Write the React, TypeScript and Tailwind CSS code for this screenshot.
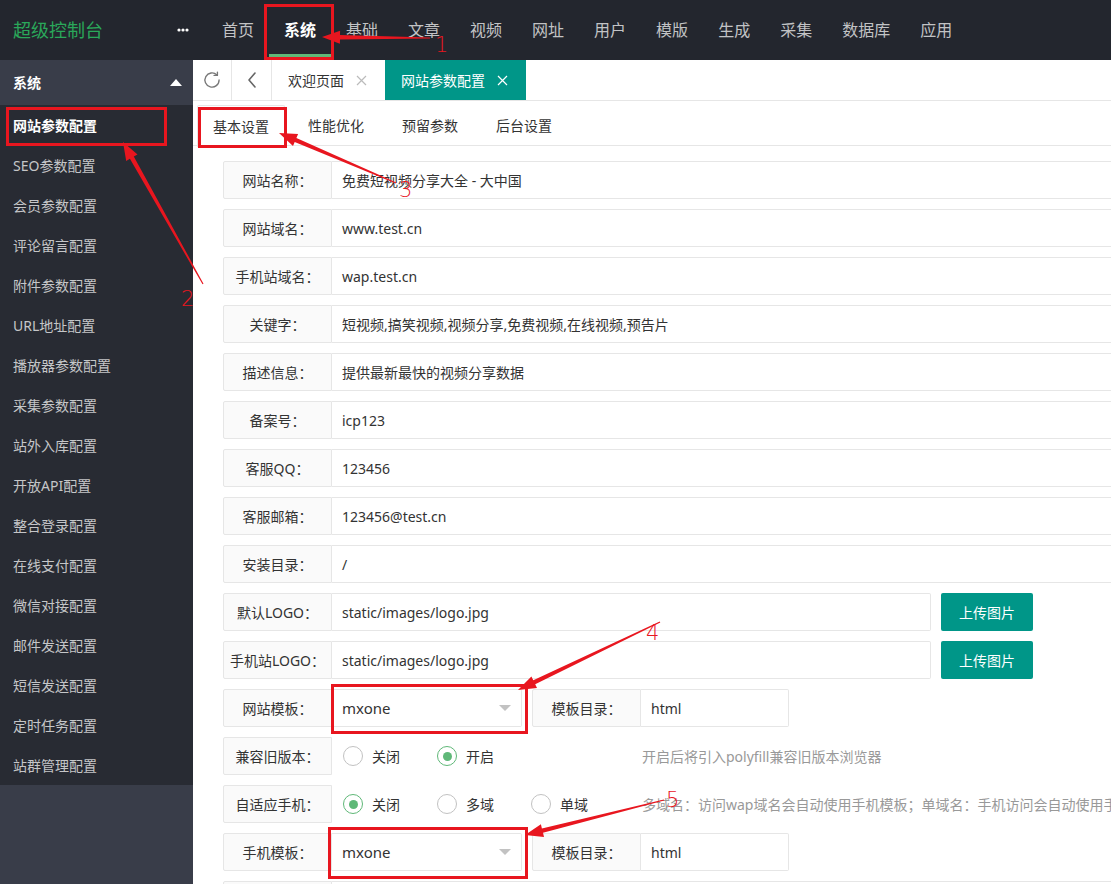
import React from "react";

const RED = "#e8161f";

function arrowPoints(x1: number, y1: number, x2: number, y2: number, wt = 1.2, wh = 4.5, hl = 18, hw = 13) {
  const dx = x2 - x1;
  const dy = y2 - y1;
  const len = Math.hypot(dx, dy);
  const ux = dx / len;
  const uy = dy / len;
  const nx = -uy;
  const ny = ux;
  const bx = x2 - ux * hl;
  const by = y2 - uy * hl;
  const p = (x: number, y: number) => `${x.toFixed(1)},${y.toFixed(1)}`;
  return [
    p(x1 + (nx * wt) / 2, y1 + (ny * wt) / 2),
    p(bx + (nx * wh) / 2, by + (ny * wh) / 2),
    p(bx + (nx * hw) / 2, by + (ny * hw) / 2),
    p(x2, y2),
    p(bx - (nx * hw) / 2, by - (ny * hw) / 2),
    p(bx - (nx * wh) / 2, by - (ny * wh) / 2),
    p(x1 - (nx * wt) / 2, y1 - (ny * wt) / 2),
  ].join(" ");
}

const navItems = ["首页", "系统", "基础", "文章", "视频", "网址", "用户", "模版", "生成", "采集", "数据库", "应用"];

const sideItems = [
  "网站参数配置",
  "SEO参数配置",
  "会员参数配置",
  "评论留言配置",
  "附件参数配置",
  "URL地址配置",
  "播放器参数配置",
  "采集参数配置",
  "站外入库配置",
  "开放API配置",
  "整合登录配置",
  "在线支付配置",
  "微信对接配置",
  "邮件发送配置",
  "短信发送配置",
  "定时任务配置",
  "站群管理配置",
];

const textRows: [string, string][] = [
  ["网站名称：", "免费短视频分享大全 - 大中国"],
  ["网站域名：", "www.test.cn"],
  ["手机站域名：", "wap.test.cn"],
  ["关键字：", "短视频,搞笑视频,视频分享,免费视频,在线视频,预告片"],
  ["描述信息：", "提供最新最快的视频分享数据"],
  ["备案号：", "icp123"],
  ["客服QQ：", "123456"],
  ["客服邮箱：", "123456@test.cn"],
  ["安装目录：", "/"],
];

function Label({ children }: { children?: React.ReactNode }) {
  return (
    <div className="w-[109px] h-[38px] shrink-0 border border-[#e6e6e6] bg-[#fafafa] rounded-l-[2px] flex items-center justify-center text-[14px] text-[#333] whitespace-nowrap">
      {children}
    </div>
  );
}

function Radio({ label, checked }: { label: string; checked?: boolean }) {
  return (
    <div className="w-[94px] flex items-center gap-[9px]">
      <div
        className={
          "w-[20px] h-[20px] rounded-full border flex items-center justify-center " +
          (checked ? "border-[#5fb878] border-[1.5px]" : "border-[#c2c2c2]")
        }
      >
        {checked && <div className="w-[9px] h-[9px] rounded-full bg-[#5fb878]" />}
      </div>
      <span className="text-[14px] text-[#333]">{label}</span>
    </div>
  );
}

function SelectRow({ label }: { label: string }) {
  return (
    <div className="flex h-[38px] mb-[10px]">
      <Label>{label}</Label>
      <div className="w-[190px] h-[38px] border border-l-0 border-[#e6e6e6] rounded-r-[2px] flex items-center justify-between pl-[10px] pr-[10px] text-[15px] text-[#333]">
        <span>mxone</span>
        <div className="w-0 h-0 border-x-[6px] border-x-transparent border-t-[6px] border-t-[#c2c2c2]" />
      </div>
      <div className="ml-[10px] flex">
        <Label>模板目录：</Label>
        <div className="w-[148px] h-[38px] border border-l-0 border-[#e6e6e6] rounded-r-[2px] flex items-center pl-[10px] text-[14px] text-[#333]">
          html
        </div>
      </div>
    </div>
  );
}

export default function App() {
  return (
    <div
      className="relative w-[1111px] h-[884px] overflow-hidden flex flex-col bg-white"
      style={{ fontFamily: '"Noto Sans", "Noto Sans CJK SC", sans-serif' }}
    >
      {/* Header */}
      <header className="h-[60px] shrink-0 flex bg-[#23262e]">
        <div className="w-[200px] flex items-center justify-between pl-[13px] pr-[11px]">
          <span className="text-[18px] text-[#2aa85a]">超级控制台</span>
          <svg width="12" height="4" viewBox="0 0 12 4">
            <circle cx="2" cy="2" r="1.6" fill="#fff" />
            <circle cx="6" cy="2" r="1.6" fill="#fff" />
            <circle cx="10" cy="2" r="1.6" fill="#fff" />
          </svg>
        </div>
        <nav className="flex pl-[7px]">
          {navItems.map((n, i) => (
            <div key={n} className="relative h-[60px] px-[15px] flex items-center">
              <span className={"text-[16px] " + (i === 1 ? "text-white font-bold" : "text-[#c2c3c5]")}>{n}</span>
              {i === 1 && <div className="absolute left-0 right-0 bottom-[3px] h-[3px] bg-[#5fb878]" />}
            </div>
          ))}
        </nav>
      </header>

      <div className="flex flex-1 min-h-0">
        {/* Sidebar */}
        <aside className="w-[193px] shrink-0 bg-[#393d49] flex flex-col">
          <div className="h-[45px] flex items-center justify-between pl-[13px] pr-[11px]">
            <span className="text-[14px] text-white font-bold">系统</span>
            <div className="w-0 h-0 border-x-[6px] border-x-transparent border-b-[7px] border-b-white" />
          </div>
          <div className="bg-[#282b33]">
            {sideItems.map((s, i) => (
              <div key={s} className="h-[40px] flex items-center pl-[13px]">
                <span className={"text-[14px] " + (i === 0 ? "text-white font-bold" : "text-[#c5c6c8]")}>{s}</span>
              </div>
            ))}
          </div>
        </aside>

        {/* Main */}
        <main className="flex-1 min-w-0 overflow-hidden flex flex-col">
          <div className="h-[41px] shrink-0 flex border-b border-[#e6e6e6]">
            <div className="w-[39px] flex items-center justify-center border-r border-[#e6e6e6]">
              <svg width="20" height="20" viewBox="0 0 24 24" fill="none" stroke="#777" strokeWidth="1.6" strokeLinecap="round" strokeLinejoin="round">
                <path d="M20.5 12a8.5 8.5 0 1 1-2.6-6.1" />
                <path d="M18.5 2.5v4h-4" />
              </svg>
            </div>
            <div className="w-[40px] flex items-center justify-center border-r border-[#e6e6e6]">
              <svg width="14" height="18" viewBox="0 0 14 18" fill="none" stroke="#666" strokeWidth="1.6" strokeLinecap="round" strokeLinejoin="round">
                <path d="M10 2 L4 9 L10 16" />
              </svg>
            </div>
            <div className="w-[113px] flex items-center pl-[16px] gap-[12px]">
              <span className="text-[14px] text-[#333]">欢迎页面</span>
              <svg width="11" height="11" viewBox="0 0 11 11" stroke="#bbb" strokeWidth="1.2">
                <path d="M1 1 L10 10 M10 1 L1 10" />
              </svg>
            </div>
            <div className="w-[141px] bg-[#009688] flex items-center pl-[16px] gap-[12px]">
              <span className="text-[14px] text-white">网站参数配置</span>
              <svg width="11" height="11" viewBox="0 0 11 11" stroke="#fff" strokeWidth="1.2">
                <path d="M1 1 L10 10 M10 1 L1 10" />
              </svg>
            </div>
          </div>

          {/* Sub tabs */}
          <div className="mt-[4px] h-[41px] shrink-0 flex gap-[8px] pl-[4px] border-b border-[#e6e6e6]">
            {["基本设置", "性能优化", "预留参数", "后台设置"].map((t, i) => (
              <div
                key={t}
                className={
                  "h-[41px] px-[15px] flex items-center text-[14px] text-[#333] " +
                  (i === 0 ? "border border-b-0 border-[#e6e6e6] bg-white rounded-t-[2px] -mb-px h-[42px]" : "")
                }
              >
                {t}
              </div>
            ))}
          </div>

          {/* Form */}
          <div className="pt-[15px] pl-[30px] w-[1200px]">
            {textRows.map(([l, v]) => (
              <div key={l} className="flex h-[38px] mb-[10px]">
                <Label>{l}</Label>
                <div className="w-[880px] h-[38px] border border-l-0 border-[#e6e6e6] rounded-r-[2px] flex items-center pl-[10px] text-[14px] text-[#333]">
                  {v}
                </div>
              </div>
            ))}
            {["默认LOGO：", "手机站LOGO："].map((l) => (
              <div key={l} className="flex h-[38px] mb-[10px]">
                <Label>{l}</Label>
                <div className="w-[599px] h-[38px] border border-l-0 border-[#e6e6e6] rounded-r-[2px] flex items-center pl-[10px] text-[14px] text-[#333]">
                  static/images/logo.jpg
                </div>
                <button className="ml-[10px] w-[92px] h-[38px] bg-[#009688] text-white text-[14px] rounded-[2px]">上传图片</button>
              </div>
            ))}
            <SelectRow label="网站模板：" />
            <div className="flex h-[38px] mb-[10px]">
              <Label>兼容旧版本：</Label>
              <div className="w-[310px] flex items-center pl-[11px]">
                <Radio label="关闭" />
                <Radio label="开启" checked />
              </div>
              <div className="flex items-center text-[14px] text-[#999] whitespace-nowrap">开启后将引入polyfill兼容旧版本浏览器</div>
            </div>
            <div className="flex h-[38px] mb-[10px]">
              <Label>自适应手机：</Label>
              <div className="w-[310px] flex items-center pl-[11px]">
                <Radio label="关闭" checked />
                <Radio label="多域" />
                <Radio label="单域" />
              </div>
              <div className="flex items-center text-[14px] text-[#999] whitespace-nowrap">
                多域名：访问wap域名会自动使用手机模板；单域名：手机访问会自动使用手机模板
              </div>
            </div>
            <SelectRow label="手机模板：" />
            <div className="flex h-[38px] mb-[10px]">
              <Label />
              <div className="w-[880px] h-[38px] border border-l-0 border-[#e6e6e6] rounded-r-[2px]" />
            </div>
          </div>
        </main>
      </div>

      {/* Annotations */}
      <svg className="absolute inset-0 pointer-events-none" width="1111" height="884" viewBox="0 0 1111 884">
        <g fill="none" stroke={RED} strokeWidth="3">
          <rect x="265.5" y="5.5" width="67" height="53" />
          <rect x="7.5" y="108.5" width="158" height="36" />
          <rect x="199.5" y="108.5" width="86" height="38" />
          <rect x="332.5" y="685.5" width="194" height="47" />
          <rect x="329.5" y="828.5" width="197" height="49" />
        </g>
        <g fill={RED}>
          <polygon points={arrowPoints(430, 38, 322, 37)} />
          <polygon points={arrowPoints(203, 284, 123, 142)} />
          <polygon points={arrowPoints(396, 183, 279, 133)} />
          <polygon points={arrowPoints(660, 622, 518, 690)} />
          <polygon points={arrowPoints(664, 800, 525, 835)} />
        </g>
        <g fill={RED} fontSize="21" style={{ fontFamily: '"DejaVu Sans", sans-serif', fontWeight: 200 }}>
          <text x="435" y="52">1</text>
          <text x="181" y="306">2</text>
          <text x="399" y="197">3</text>
          <text x="646" y="640">4</text>
          <text x="666" y="807">5</text>
        </g>
      </svg>
    </div>
  );
}
